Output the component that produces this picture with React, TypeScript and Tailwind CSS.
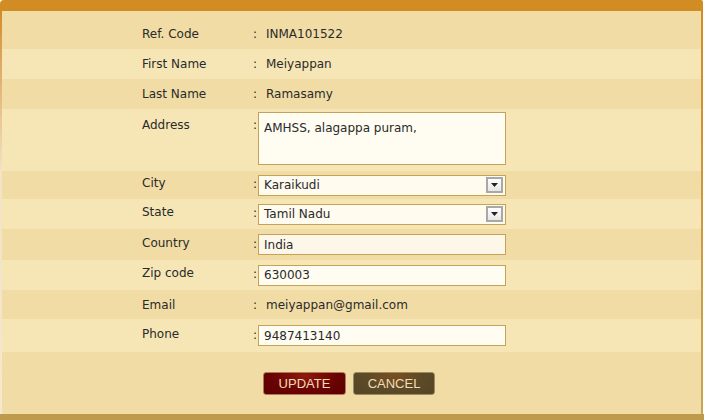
import { useState } from 'react';

const font = { fontFamily: '"DejaVu Sans", Verdana, sans-serif' };

function Colon() {
  return <span className="w-[14px] shrink-0 pl-[1px]">:</span>;
}

function SelectBox({ value }: { value: string }) {
  return (
    <div className="w-[248px] h-[21px] border border-[#c6a256] bg-[#fffbef] flex items-center justify-between pl-[5px] pr-[2px]">
      <span>{value}</span>
      <div className="w-[17px] h-[16px] border-2 border-[#a8a8a8] bg-gradient-to-b from-white to-[#e6e6e6] flex items-center justify-center">
        <svg width="7" height="4" viewBox="0 0 7 4">
          <path d="M0 0h7L3.5 4z" fill="#222" />
        </svg>
      </div>
    </div>
  );
}

function TextBox({ value, tone = 'bg-[#fffcf1]' }: { value: string; tone?: string }) {
  return (
    <div className={`w-[248px] h-[21px] border border-[#c6a256] ${tone} flex items-center pl-[5px]`}>
      {value}
    </div>
  );
}

export default function App() {
  const [address] = useState('AMHSS, alagappa puram,');

  return (
    <div className="w-[704px] h-[420px] bg-white text-[12px] text-[#2a2a2a]" style={font}>
      <div className="h-[11px] bg-[#d28c24] rounded-tl-[4px] rounded-tr-[2px] mr-[1px]" />
      <div className="flex h-[403px] mr-[1px]">
        <div className="w-[2px] bg-gradient-to-b from-[#d28c24] via-[#f3e3c4] via-40% to-[#f4e8cf]" />
        <div className="flex-1 flex flex-col">
          <div className="h-[38px] pt-[7px] flex items-center bg-[#f1dca5] pl-[140px]">
            <span className="w-[110px]">Ref. Code</span>
            <Colon />
            <span>INMA101522</span>
          </div>
          <div className="h-[30px] flex items-center bg-[#f6e6b6] pl-[140px]">
            <span className="w-[110px]">First Name</span>
            <Colon />
            <span>Meiyappan</span>
          </div>
          <div className="h-[30px] flex items-center bg-[#f1dca5] pl-[140px]">
            <span className="w-[110px]">Last Name</span>
            <Colon />
            <span>Ramasamy</span>
          </div>
          <div className="h-[62px] flex items-start bg-[#f6e6b6] pl-[140px]">
            <span className="w-[110px] pt-[7px]">Address</span>
            <span className="w-[6px] pt-[7px] pl-[1px]">:</span>
            <div className="mt-[3px] w-[248px] h-[53px] border border-[#c6a256] bg-[#fffcf1] pl-[5px] pt-[6px]">
              {address}
            </div>
          </div>
          <div className="h-[28px] flex items-center bg-[#f1dca5] pl-[140px]">
            <span className="w-[110px] pb-[4px]">City</span>
            <span className="w-[6px] pb-[2px] pl-[1px]">:</span>
            <SelectBox value="Karaikudi" />
          </div>
          <div className="h-[30px] flex items-center bg-[#f6e6b6] pl-[140px]">
            <span className="w-[110px] pb-[4px]">State</span>
            <span className="w-[6px] pb-[2px] pl-[1px]">:</span>
            <SelectBox value="Tamil Nadu" />
          </div>
          <div className="h-[31px] flex items-center bg-[#f1dca5] pl-[140px]">
            <span className="w-[110px] pb-[4px]">Country</span>
            <span className="w-[6px] pb-[2px] pl-[1px]">:</span>
            <TextBox value="India" tone="bg-[#fdf7ea]" />
          </div>
          <div className="h-[30px] flex items-center bg-[#f6e6b6] pl-[140px]">
            <span className="w-[110px] pb-[4px]">Zip code</span>
            <span className="w-[6px] pb-[2px] pl-[1px]">:</span>
            <TextBox value="630003" />
          </div>
          <div className="h-[29px] flex items-center bg-[#f1dca5] pl-[140px]">
            <span className="w-[110px]">Email</span>
            <Colon />
            <span>meiyappan@gmail.com</span>
          </div>
          <div className="h-[33px] flex items-center bg-[#f6e6b6] pl-[140px]">
            <span className="w-[110px] pb-[4px]">Phone</span>
            <span className="w-[6px] pb-[2px] pl-[1px]">:</span>
            <TextBox value="9487413140" />
          </div>
          <div className="flex-1 bg-[#f1dca5] flex items-start pt-[20px] pl-[261px] gap-[7px]" style={{ fontFamily: '"Liberation Sans", Arial, sans-serif' }}>
            <button className="w-[83px] h-[23px] rounded-[3px] border border-[#b07a5a] text-[13px] text-[#f2dcb8] bg-[radial-gradient(ellipse_at_50%_15%,#8e1a0c_0%,#6b0303_55%,#5a0000_100%)]">
              UPDATE
            </button>
            <button className="w-[82px] h-[23px] rounded-[3px] border border-[#a08a62] text-[13px] text-[#f2dcb8] bg-[radial-gradient(ellipse_at_50%_10%,#7a4e1e_0%,#5c4a27_50%,#554626_100%)]">
              CANCEL
            </button>
          </div>
        </div>
        <div className="w-[2px] bg-gradient-to-b from-[#d28c24] to-[#c9a552]" />
      </div>
      <div className="h-[6px] bg-[#bd9a4c]" />
    </div>
  );
}
